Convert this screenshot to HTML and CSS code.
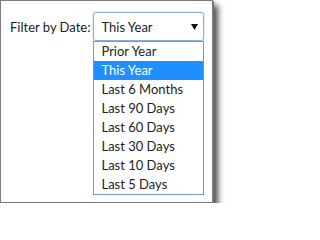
FILE: index.html
```html
<!DOCTYPE html>
<html>
<head>
<meta charset="utf-8">
<link rel="stylesheet" href="styles.css">
</head>
<body>
<div class="panel">
  <div class="row">
    <span class="label">Filter by Date:</span>
    <div class="select-wrap">
      <div class="select">
        <span class="value">This Year</span>
        <svg class="arrow" width="7" height="6" viewBox="0 0 7 6"><path d="M0 0H7L3.5 6Z" fill="#111"/></svg>
      </div>
      <ul class="list">
        <li>Prior Year</li>
        <li class="sel">This Year</li>
        <li>Last 6 Months</li>
        <li>Last 90 Days</li>
        <li>Last 60 Days</li>
        <li>Last 30 Days</li>
        <li>Last 10 Days</li>
        <li>Last 5 Days</li>
      </ul>
    </div>
  </div>
</div>
</body>
</html>
```
FILE: styles.css
```css
html, body { margin: 0; padding: 0; background: #fff; }
body { font-family: "Lato", "Noto Sans", sans-serif; font-size: 13px; color: #222; }
.panel {
  width: 211px;
  height: 201px;
  border: 1px solid #7a7a7a;
  box-shadow: 1px 1px 0 #777, 5px 5px 6px rgba(0,0,0,0.7);
  box-sizing: content-box;
  padding: 0;
}
.row {
  display: flex;
  align-items: center;
  gap: 3px;
  padding: 11px 0 0 9px;
}
.label { white-space: nowrap; }
.select-wrap { position: relative; width: 111px; }
.select {
  height: 27px;
  border: 1px solid #86aee8;
  border-radius: 3px;
  box-shadow: 0 0 2px rgba(90,140,230,0.6);
  display: flex;
  align-items: center;
  justify-content: space-between;
  padding: 0 5px 0 7px;
}
.arrow { display: block; }
.list {
  position: absolute;
  left: 0;
  top: 29px;
  width: 109px;
  margin: 0;
  padding: 0;
  list-style: none;
  border: 1px solid #6f96dc;
  background: #fff;
}
.list li {
  height: 19px;
  line-height: 19px;
  padding-left: 7px;
  white-space: nowrap;
}
.list li.sel { background: #1e8fff; color: #fff; }
```
